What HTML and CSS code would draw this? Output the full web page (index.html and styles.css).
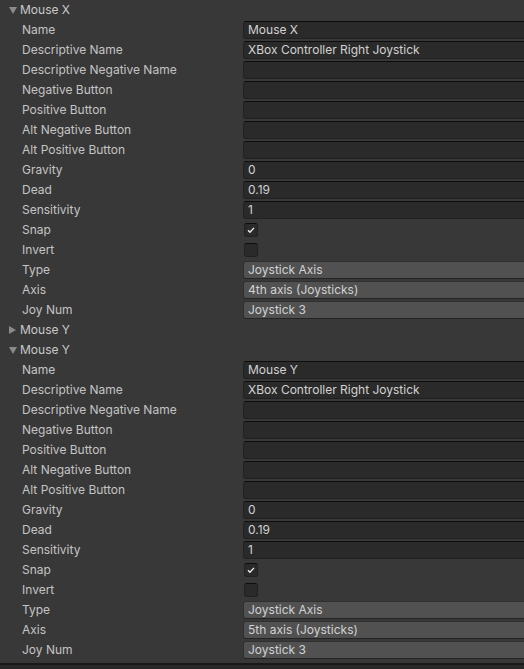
FILE: index.html
```html
<!DOCTYPE html>
<html>
<head>
<meta charset="utf-8">
<link rel="stylesheet" href="styles.css">
</head>
<body>
<div class="panel">
  <div class="foldout open"><span class="arrow down"></span><span class="title">Mouse X</span></div>
  <div class="row"><span class="label">Name</span><span class="field text">Mouse X</span></div>
  <div class="row"><span class="label">Descriptive Name</span><span class="field text">XBox Controller Right Joystick</span></div>
  <div class="row"><span class="label">Descriptive Negative Name</span><span class="field text"></span></div>
  <div class="row"><span class="label">Negative Button</span><span class="field text"></span></div>
  <div class="row"><span class="label">Positive Button</span><span class="field text"></span></div>
  <div class="row"><span class="label">Alt Negative Button</span><span class="field text"></span></div>
  <div class="row"><span class="label">Alt Positive Button</span><span class="field text"></span></div>
  <div class="row"><span class="label">Gravity</span><span class="field text">0</span></div>
  <div class="row"><span class="label">Dead</span><span class="field text">0.19</span></div>
  <div class="row"><span class="label">Sensitivity</span><span class="field text">1</span></div>
  <div class="row"><span class="label">Snap</span><span class="check on"><svg viewBox="0 0 14 14" width="14" height="14"><path d="M3.5 7.2 L5.8 9.5 L10.5 4.5" fill="none" stroke="#f0f0f0" stroke-width="1.6"/></svg></span></div>
  <div class="row"><span class="label">Invert</span><span class="check"></span></div>
  <div class="row"><span class="label">Type</span><span class="field drop">Joystick Axis</span></div>
  <div class="row"><span class="label">Axis</span><span class="field drop">4th axis (Joysticks)</span></div>
  <div class="row"><span class="label">Joy Num</span><span class="field drop">Joystick 3</span></div>

  <div class="foldout"><span class="arrow right"></span><span class="title">Mouse Y</span></div>

  <div class="foldout open"><span class="arrow down"></span><span class="title">Mouse Y</span></div>
  <div class="row"><span class="label">Name</span><span class="field text">Mouse Y</span></div>
  <div class="row"><span class="label">Descriptive Name</span><span class="field text">XBox Controller Right Joystick</span></div>
  <div class="row"><span class="label">Descriptive Negative Name</span><span class="field text"></span></div>
  <div class="row"><span class="label">Negative Button</span><span class="field text"></span></div>
  <div class="row"><span class="label">Positive Button</span><span class="field text"></span></div>
  <div class="row"><span class="label">Alt Negative Button</span><span class="field text"></span></div>
  <div class="row"><span class="label">Alt Positive Button</span><span class="field text"></span></div>
  <div class="row"><span class="label">Gravity</span><span class="field text">0</span></div>
  <div class="row"><span class="label">Dead</span><span class="field text">0.19</span></div>
  <div class="row"><span class="label">Sensitivity</span><span class="field text">1</span></div>
  <div class="row"><span class="label">Snap</span><span class="check on"><svg viewBox="0 0 14 14" width="14" height="14"><path d="M3.5 7.2 L5.8 9.5 L10.5 4.5" fill="none" stroke="#f0f0f0" stroke-width="1.6"/></svg></span></div>
  <div class="row"><span class="label">Invert</span><span class="check"></span></div>
  <div class="row"><span class="label">Type</span><span class="field drop">Joystick Axis</span></div>
  <div class="row"><span class="label">Axis</span><span class="field drop">5th axis (Joysticks)</span></div>
  <div class="row"><span class="label">Joy Num</span><span class="field drop">Joystick 3</span></div>
</div>
<div class="bottom"></div>
</body>
</html>
```

FILE: styles.css
```css
html, body {
  margin: 0;
  padding: 0;
  background: #383838;
  overflow: hidden;
  height: 669px;
}
body {
  font-family: Inter, "Noto Sans", sans-serif;
  font-size: 12px;
  color: #c4c4c4;
}
.panel {
  height: 663px;
}
.foldout {
  height: 20px;
  display: flex;
  align-items: center;
  padding-left: 8px;
}
.arrow {
  width: 12px;
  height: 12px;
  position: relative;
}
.arrow.down::before {
  content: "";
  position: absolute;
  left: 1px;
  top: 3px;
  border-left: 4px solid transparent;
  border-right: 4px solid transparent;
  border-top: 7px solid #8a8a8a;
}
.arrow.right::before {
  content: "";
  position: absolute;
  left: 1px;
  top: 2px;
  border-top: 4px solid transparent;
  border-bottom: 4px solid transparent;
  border-left: 7px solid #8a8a8a;
}
.title {
  color: #c8c8c8;
  line-height: 18px;
  padding-bottom: 1px;
}
.row {
  height: 20px;
  display: grid;
  grid-template-columns: 243px 1fr;
  align-items: center;
}
.label {
  padding-left: 22px;
  white-space: nowrap;
  line-height: 18px;
  padding-bottom: 1px;
}
.field {
  height: 18px;
  box-sizing: border-box;
  margin-right: -6px;
  border-radius: 3px;
  padding: 0 4px 1px;
  display: flex;
  align-items: center;
  color: #d2d2d2;
  white-space: nowrap;
}
.field.text {
  background: #2a2a2a;
  border: 1px solid #212121;
  border-top-color: #0d0d0d;
}
.field.drop {
  background: #515151;
  border: 1px solid #303030;
  border-bottom-color: #242424;
}
.check {
  width: 14px;
  height: 14px;
  box-sizing: border-box;
  margin-left: 1px;
  background: #2a2a2a;
  border: 1px solid #212121;
  border-top-color: #0d0d0d;
  border-radius: 3px;
  display: flex;
  align-items: center;
  justify-content: center;
}
.check svg {
  display: block;
}
.bottom {
  height: 6px;
  border-top: 2px solid #191919;
  background: #282828;
}
```
